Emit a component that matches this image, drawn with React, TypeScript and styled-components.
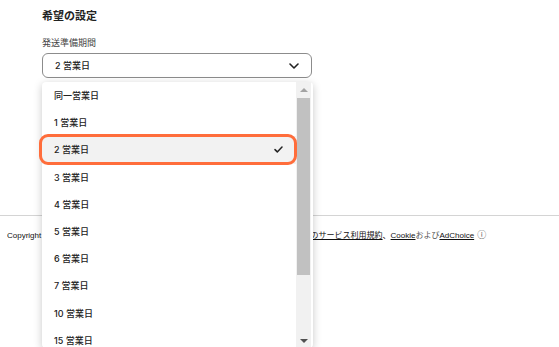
import styled, { createGlobalStyle } from "styled-components";

const GlobalStyle = createGlobalStyle`
  html, body {
    margin: 0;
    padding: 0;
    background: #ffffff;
    overflow: hidden;
  }
  body {
    font-family: "Inter", "Noto Sans CJK JP", sans-serif;
    color: #222222;
  }
`;

const options = [
  "同一営業日",
  "1 営業日",
  "2 営業日",
  "3 営業日",
  "4 営業日",
  "5 営業日",
  "6 営業日",
  "7 営業日",
  "10 営業日",
  "15 営業日",
];

const selected = "2 営業日";

const App = () => {
  return (
    <Page>
      <GlobalStyle />
      <Settings>
        <Heading>希望の設定</Heading>
        <FieldLabel>発送準備期間</FieldLabel>
        <SelectWrap>
          <SelectBox>
            <span>{selected}</span>
            <svg width="10" height="6" viewBox="0 0 10 6" fill="none">
              <path
                d="M1 1l4 4 4-4"
                stroke="#222"
                strokeWidth="1.6"
                strokeLinecap="round"
                strokeLinejoin="round"
              />
            </svg>
          </SelectBox>
          <Dropdown>
            <OptionList>
              {options.map((opt) => (
                <Option key={opt} $active={opt === selected}>
                  <span>{opt}</span>
                  {opt === selected && (
                    <svg width="9" height="7" viewBox="0 0 9 7" fill="none">
                      <path
                        d="M1 3.6l2.3 2.3L8 1"
                        stroke="#222"
                        strokeWidth="1.5"
                        strokeLinecap="round"
                        strokeLinejoin="round"
                      />
                    </svg>
                  )}
                </Option>
              ))}
            </OptionList>
            <Scrollbar>
              <ScrollButton>
                <Arrow $up $color="#a3a3a3" />
              </ScrollButton>
              <Track>
                <Thumb />
              </Track>
              <ScrollButton>
                <Arrow $color="#505050" />
              </ScrollButton>
            </Scrollbar>
          </Dropdown>
        </SelectWrap>
      </Settings>
      <Footer>
        <Copyright>Copyright © 2025 Etsy, Inc.</Copyright>
        <Legal>
          <LegalLink>Etsyのサービス利用規約</LegalLink>、
          <LegalLink>Cookie</LegalLink>
          <Muted>および</Muted>
          <LegalLink>AdChoice</LegalLink>
          <Info>ⓘ</Info>
        </Legal>
      </Footer>
    </Page>
  );
};

const Page = styled.div`
  width: 559px;
  height: 347px;
  overflow: hidden;
`;

const Settings = styled.section`
  box-sizing: border-box;
  height: 215px;
  padding: 9px 0 0 42px;
`;

const Heading = styled.h2`
  margin: 0;
  font-size: 11px;
  line-height: 14px;
  font-weight: 700;
  color: #222222;
`;

const FieldLabel = styled.div`
  margin-top: 14px;
  font-size: 9px;
  line-height: 12px;
  color: #444444;
`;

const SelectWrap = styled.div`
  position: relative;
  width: 270px;
  margin-top: 4px;
`;

const SelectBox = styled.div`
  box-sizing: border-box;
  height: 25px;
  display: flex;
  align-items: center;
  justify-content: space-between;
  padding: 0 12px 0 12px;
  border: 1px solid #8c8c8c;
  border-radius: 6px;
  font-size: 9px;
  font-weight: 500;
  color: #222222;
  background: #ffffff;
`;

const Dropdown = styled.div`
  position: absolute;
  top: 29px;
  left: 0;
  width: 271px;
  height: 266px;
  display: flex;
  background: #ffffff;
  border-radius: 4px;
  box-shadow: 0 2px 8px rgba(0, 0, 0, 0.22);
  padding-right: 2px;
  box-sizing: border-box;
  z-index: 2;
`;

const OptionList = styled.ul`
  list-style: none;
  margin: 0;
  padding: 0;
  flex: 1;
  min-width: 0;
`;

const Option = styled.li<{ $active?: boolean }>`
  position: relative;
  height: 27.2px;
  display: flex;
  align-items: center;
  justify-content: space-between;
  padding: 0 13px 0 12px;
  font-size: 9px;
  font-weight: 500;
  color: #222222;
  background: ${(p) => (p.$active ? "#f2f2f2" : "transparent")};

  &::after {
    content: "";
    display: ${(p) => (p.$active ? "block" : "none")};
    position: absolute;
    left: -3px;
    right: -1px;
    top: -2px;
    bottom: -1px;
    border: 3px solid #ff6d3b;
    border-radius: 9px;
  }
`;

const Scrollbar = styled.div`
  width: 15px;
  display: flex;
  flex-direction: column;
  background: #f1f1f1;
`;

const ScrollButton = styled.div`
  height: 15px;
  display: flex;
  align-items: center;
  justify-content: center;
`;

const Arrow = styled.div<{ $up?: boolean; $color: string }>`
  width: 0;
  height: 0;
  border-left: 4px solid transparent;
  border-right: 4px solid transparent;
  ${(p) =>
    p.$up
      ? `border-bottom: 4px solid ${p.$color};`
      : `border-top: 4px solid ${p.$color};`}
`;

const Track = styled.div`
  flex: 1;
  padding: 1px 1px 0 1px;
`;

const Thumb = styled.div`
  height: 177px;
  background: #c1c1c1;
`;

const Footer = styled.footer`
  border-top: 1px solid #d4d4d4;
  display: flex;
  align-items: center;
  padding: 14px 7px 0 7px;
  font-family: "Liberation Sans", "Noto Sans CJK JP", sans-serif;
  font-size: 8px;
  line-height: 11px;
  color: #111111;
  white-space: nowrap;
`;

const Copyright = styled.span`
  width: 284px;
  overflow: hidden;
`;

const Legal = styled.span`
  margin-left: 4px;
  display: flex;
  align-items: center;
`;

const LegalLink = styled.span`
  text-decoration: underline;
  color: #111111;
`;

const Muted = styled.span`
  color: #555555;
`;

const Info = styled.span`
  margin-left: 3px;
  font-size: 9px;
  color: #555555;
`;

export default App;
